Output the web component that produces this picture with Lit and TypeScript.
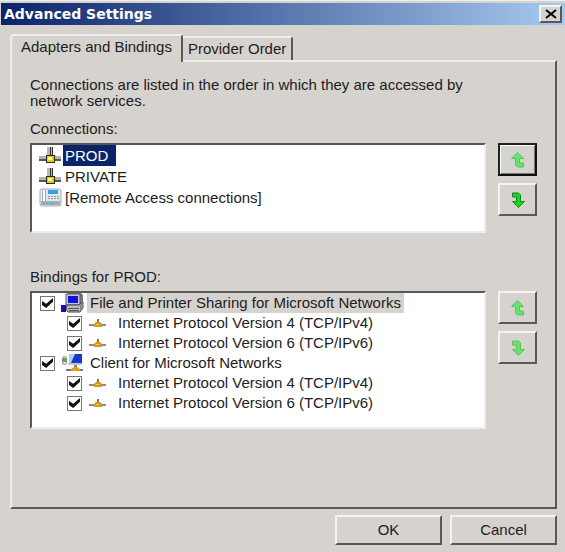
import { LitElement, html, svg, css } from "lit";
import { customElement, property, state } from "lit/decorators.js";
import { classMap } from "lit/directives/class-map.js";

const adapterIcon = html`<svg class="icon" width="24" height="20" viewBox="0 0 24 20" aria-hidden="true">
  <path d="M8 1h3v11H8z" fill="#b8b8bc"/><path d="M11 1h1v11h-1z" fill="#333"/><path d="M12 1h1v11h-1z" fill="#b8b8bc"/><path d="M13 1h1v11h-1z" fill="#333"/>
  <path d="M0 10h22v3H0z" fill="#b4b4b8"/><path d="M0 13h22v2H0z" fill="#55555a"/>
  <path d="M7 9h9v8H7z" fill="#2c2c10"/><path d="M8 10h7v6H8z" fill="#d8d020"/><path d="M9 11h4v3H9z" fill="#ffff80"/>
</svg>`;

const remoteIcon = html`<svg class="icon" width="24" height="20" viewBox="0 0 24 20" aria-hidden="true">
  <rect x="1" y="1" width="21" height="17" rx="2" fill="#e4e8ea" stroke="#a3adb2"/>
  <path d="M2 2h5v11H2z" fill="#fafbfb"/><path d="M3.500 2v11M6.500 2v11" stroke="#9aa9b0"/>
  <path d="M9 2h10v4H9z" fill="#2ba4e0"/>
  <path d="M9 8.500h11M9 10.500h11" stroke="#8798a1" stroke-dasharray="2 1"/>
  <path d="M2 13h19v4H2z" fill="#a4afb5"/><path d="M4 15.500h12" stroke="#3bb0dc" stroke-dasharray="2 1"/>
</svg>`;

const serviceIcon = html`<svg class="icon" width="24" height="20" viewBox="0 0 24 20" aria-hidden="true">
  <path d="M6 1l1-1h13l2 2v9H6z" fill="#7a7a7e"/><path d="M5 1h14v11H5z" fill="#c8c8c8" stroke="#555"/>
  <path d="M7 3h10v7H7z" fill="#1010e8"/>
  <path d="M6 12h12l4-3v6l-3 4H7l-2-3z" fill="#bcbcbc" stroke="#444"/>
  <path d="M7 15.500h11M8 17.500h10" stroke="#555"/><path d="M19 12l3-2v5l-3 3z" fill="#88888c"/>
  <path d="M0 12h5v7H0z" fill="#1010b8"/>
</svg>`;

const clientIcon = html`<svg class="icon" width="24" height="20" viewBox="0 0 24 20" aria-hidden="true">
  <rect x="1.500" y="3.500" width="4" height="8" rx="2" fill="#e4ece0" stroke="#888"/><path d="M2 5h3v4H2z" fill="#48b838"/>
  <path d="M8 1h13v9H8z" fill="#1838c8"/><path d="M8 1h6l-4 9H8z" fill="#b4c8f8"/><path d="M7 10h14v2H7z" fill="#c4c4c8"/>
  <path d="M13 12h3v3h-3z" fill="#888"/><path d="M5 17h17" stroke="#777" stroke-width="2"/>
  <path d="M10 18v-2l3-2h3l3 2v2z" fill="#e0a010"/>
</svg>`;

const protocolIcon = html`<svg class="icon" width="20" height="20" viewBox="0 0 20 20" aria-hidden="true">
  <path d="M1 12h17" stroke="#8a8a8a" stroke-width="2"/><path d="M9 6h2v4H9z" fill="#777"/>
  <path d="M6 14v-3l2-2h4l2 2v3z" fill="#d89a10"/><path d="M8 11h3v1H8z" fill="#f8cc50"/>
</svg>`;

const boundIcons = { service: serviceIcon, client: clientIcon, protocol: protocolIcon };

interface Binding {
  label: string;
  icon: keyof typeof boundIcons;
  selected?: boolean;
}

@customElement("move-button")
export class MoveButton extends LitElement {
  @property() direction: "up" | "down" = "up";
  @property({ type: Boolean }) faded = false;
  @property({ type: Boolean }) focused = false;

  static styles = css`
    :host { display: block; }
    button {
      box-sizing: border-box; display: grid; place-items: center;
      width: 39px; height: 33px; padding: 0;
      background: #d6d3ce; border: 2px solid;
      border-color: #f5f4f2 #5a5759 #5a5759 #f5f4f2;
    }
    button.focused { border-color: #222 #111 #111 #222; box-shadow: inset 1px 1px #fff, inset -1px -1px #77757a; }
    svg { display: block; }
    path { fill: #10dc18; stroke: #168424; }
    .faded path { fill: #5fe863; stroke: #68ba67; }
  `;

  render() {
    return html`<button
      type="button"
      aria-label=${this.direction === "up" ? "Move up" : "Move down"}
      class=${classMap({ faded: this.faded, focused: this.focused })}
    >
      <svg width="16" height="18" viewBox="0 0 16 18" aria-hidden="true">
        ${this.direction === "up"
          ? svg`<path d="M7.500 1.500L13.500 7.500H9.500V12H13.500V16H7.500L5.500 14V7.500H1.500Z"/>`
          : svg`<path d="M8.500 16.500L2.500 10.500H6.500V6H2.500V2H8.500L10.500 4V10.500H14.500Z"/>`}
      </svg>
    </button>`;
  }
}

@customElement("binding-row")
export class BindingRow extends LitElement {
  @property({ attribute: false }) binding!: Binding;

  static styles = css`
    :host { display: block; }
    label { display: flex; align-items: center; height: 20px; white-space: nowrap; }
    .nested { padding-left: 27px; }
    input {
      appearance: none; box-sizing: border-box; flex: none;
      width: 15px; height: 15px; margin: 0 6px 0 0;
      background: #fff; border: 1px solid #77777a;
      display: grid; place-items: center;
    }
    input:checked::before {
      content: ""; width: 11px; height: 10px; background: #111;
      clip-path: polygon(0 30%, 38% 58%, 100% 0, 100% 38%, 38% 100%, 0 70%);
    }
    .icon { display: block; flex: none; }
    .text { line-height: 20px; margin-left: 2px; padding: 0 3px; }
    .nested .text { padding-left: 8px; }
    .selected { background: #d6d3ce; }
  `;

  render() {
    const { label, icon, selected = false } = this.binding;
    return html`<label class=${classMap({ nested: icon === "protocol" })}>
      <input type="checkbox" checked />
      ${boundIcons[icon]}
      <span class=${classMap({ text: true, selected })}>${label}</span>
    </label>`;
  }
}

@customElement("app-root")
export class AdvancedSettings extends LitElement {
  @state() private connection = "PROD";

  private connections = [
    { label: "PROD", icon: adapterIcon },
    { label: "PRIVATE", icon: adapterIcon },
    { label: "[Remote Access connections]", icon: remoteIcon },
  ];

  private bindings: Binding[] = [
    { label: "File and Printer Sharing for Microsoft Networks", icon: "service", selected: true },
    { label: "Internet Protocol Version 4 (TCP/IPv4)", icon: "protocol" },
    { label: "Internet Protocol Version 6 (TCP/IPv6)", icon: "protocol" },
    { label: "Client for Microsoft Networks", icon: "client" },
    { label: "Internet Protocol Version 4 (TCP/IPv4)", icon: "protocol" },
    { label: "Internet Protocol Version 6 (TCP/IPv6)", icon: "protocol" },
  ];

  static styles = css`
    :host {
      display: flex; flex-direction: column; box-sizing: border-box; min-height: 100vh;
      padding: 2px 0 7px 1px; background: #d6d3ce; color: #1c1c22;
      font: 15px/16px "Liberation Sans", Arial, sans-serif;
      border-top: 1px solid #f0efed;
    }
    button { font: inherit; color: inherit; }
    h1, p, h2 { margin: 0; font: inherit; }
    .titlebar {
      display: flex; align-items: center; justify-content: space-between;
      height: 22px; padding: 0 3px;
      background: linear-gradient(90deg, #0a246a, #a6caf0);
    }
    .titlebar h1 { color: #fff; font: bold 14px/20px "DejaVu Sans", Verdana, sans-serif; }
    .close {
      box-sizing: border-box; width: 23px; height: 18px; padding: 0;
      display: grid; place-items: center; background: #d6d3ce;
      border: 2px solid; border-color: #f5f4f2 #5a5759 #5a5759 #f5f4f2;
    }
    .tabs { display: flex; align-items: flex-end; margin: 9px 0 0 9px; }
    .tab {
      box-sizing: border-box; background: #d6d3ce; padding: 0 5px; height: 24px;
      border: 2px solid; border-color: #f0efed #5a5759 #d6d3ce #f0efed;
      border-bottom: 0; border-left: 0; border-radius: 0 3px 0 0; white-space: nowrap;
    }
    .tab.active {
      height: 28px; padding: 0 9px 4px; margin-bottom: -2px; z-index: 1;
      border-left: 2px solid #f0efed; border-radius: 4px 3px 0 0;
    }
    .panel {
      flex: 1; margin: 0 8px 6px 9px; padding: 15px 18px 0 18px;
      border: 2px solid; border-color: #f0efed #5a5759 #5a5759 #f0efed;
    }
    .intro { max-width: 450px; }
    .caption { margin: 12px 0 6px; }
    .caption.second { margin-top: 36px; }
    .group { display: flex; gap: 12px; align-items: flex-start; }
    .list {
      box-sizing: border-box; flex: 1; min-width: 0; margin: 0; padding: 0 7px; list-style: none;
      background: #fff; border: 2px solid; border-color: #5a5759 #eeedeb #eeedeb #5a5759;
    }
    .connections { min-height: 90px; }
    .bindings { min-height: 138px; padding-left: 8px; }
    .connection {
      display: flex; align-items: center; width: 100%; height: 21px;
      padding: 0; border: 0; background: none; text-align: left;
    }
    .connection span { line-height: 21px; padding: 0 8px 0 2px; }
    .connection.selected span { background: #0a246a; color: #fff; }
    .movers { display: grid; gap: 7px; }
    .icon { display: block; flex: none; }
    .actions { display: flex; justify-content: flex-end; gap: 8px; margin-right: 8px; }
    .actions button {
      box-sizing: border-box; width: 107px; height: 30px; padding: 0;
      background: #d6d3ce; border: 2px solid; border-color: #f5f4f2 #5a5759 #5a5759 #f5f4f2;
    }
  `;

  render() {
    return html`
      <header class="titlebar">
        <h1>Advanced Settings</h1>
        <button class="close" type="button" aria-label="Close">
          <svg width="12" height="10" viewBox="0 0 12 10" aria-hidden="true">
            <path d="M1 1L11 9M11 1L1 9" stroke="#000" stroke-width="2" />
          </svg>
        </button>
      </header>
      <div class="tabs" role="tablist">
        <button class="tab active" type="button" role="tab" aria-selected="true">Adapters and Bindings</button>
        <button class="tab" type="button" role="tab" aria-selected="false">Provider Order</button>
      </div>
      <main class="panel" role="tabpanel">
        <p class="intro">Connections are listed in the order in which they are accessed by network services.</p>
        <h2 class="caption">Connections:</h2>
        <div class="group">
          <ul class="list connections">
            ${this.connections.map(
              (c) => html`<li>
                <button
                  type="button"
                  class=${classMap({ connection: true, selected: c.label === this.connection })}
                  @click=${() => (this.connection = c.label)}
                >${c.icon}<span>${c.label}</span></button>
              </li>`
            )}
          </ul>
          <div class="movers">
            <move-button direction="up" faded focused></move-button>
            <move-button direction="down"></move-button>
          </div>
        </div>
        <h2 class="caption second">Bindings for ${this.connection}:</h2>
        <div class="group">
          <ul class="list bindings">
            ${this.bindings.map((b) => html`<li><binding-row .binding=${b}></binding-row></li>`)}
          </ul>
          <div class="movers">
            <move-button direction="up" faded></move-button>
            <move-button direction="down" faded></move-button>
          </div>
        </div>
      </main>
      <footer class="actions">
        <button type="button">OK</button>
        <button type="button">Cancel</button>
      </footer>
    `;
  }
}
